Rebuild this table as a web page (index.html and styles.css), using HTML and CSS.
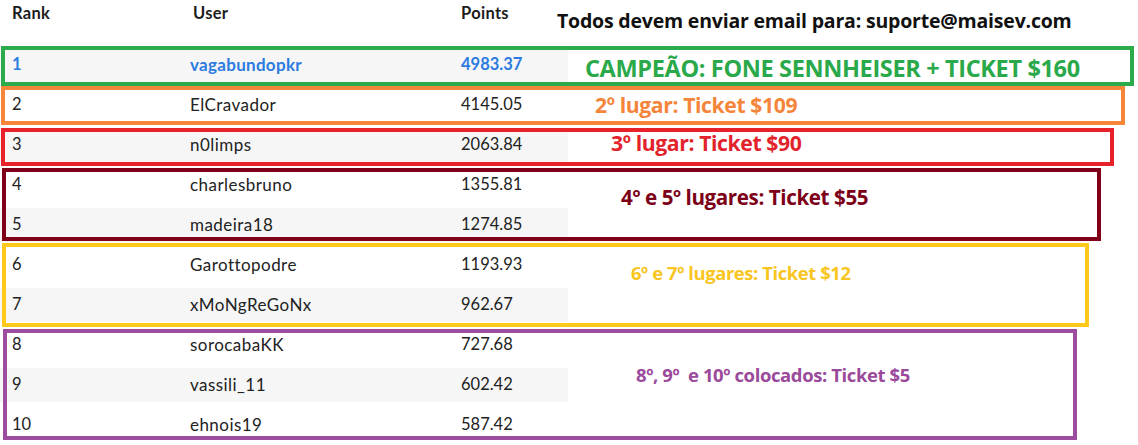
FILE: index.html
```html
<!DOCTYPE html>
<html lang="pt">
<head>
<meta charset="utf-8">
<title>Ranking</title>
<link rel="stylesheet" href="styles.css">
</head>
<body>
<div class="board">
  <div class="head">
    <div class="hcell">Rank</div>
    <div class="hcell user">User</div>
    <div class="hcell">Points</div>
    <div class="notice">Todos devem enviar email para: suporte@maisev.com</div>
  </div>
  <div class="rows">
    <div class="row odd top"><span>1</span><span class="name">vagabundopkr</span><span>4983.37</span></div>
    <div class="row"><span>2</span><span class="name">ElCravador</span><span>4145.05</span></div>
    <div class="row odd"><span>3</span><span class="name">n0limps</span><span>2063.84</span></div>
    <div class="row"><span>4</span><span class="name">charlesbruno</span><span>1355.81</span></div>
    <div class="row odd"><span>5</span><span class="name">madeira18</span><span>1274.85</span></div>
    <div class="row"><span>6</span><span class="name">Garottopodre</span><span>1193.93</span></div>
    <div class="row odd"><span>7</span><span class="name">xMoNgReGoNx</span><span>962.67</span></div>
    <div class="row"><span>8</span><span class="name">sorocabaKK</span><span>727.68</span></div>
    <div class="row odd"><span>9</span><span class="name">vassili_11</span><span>602.42</span></div>
    <div class="row"><span>10</span><span class="name">ehnois19</span><span>587.42</span></div>
  </div>

  <div class="mark m-green"><span class="label">CAMPEÃO: FONE SENNHEISER + TICKET $160</span></div>
  <div class="mark m-orange"><span class="label">2º lugar: Ticket $109</span></div>
  <div class="mark m-red"><span class="label">3º lugar: Ticket $90</span></div>
  <div class="mark m-wine"><span class="label">4º e 5º lugares: Ticket $55</span></div>
  <div class="mark m-yellow"><span class="label">6º e 7º lugares: Ticket $12</span></div>
  <div class="mark m-purple"><span class="label">8º, 9º&nbsp; e 10º colocados: Ticket $5</span></div>
</div>
</body>
</html>
```

FILE: styles.css
```css
html, body {
  margin: 0;
  padding: 0;
  background: #ffffff;
}

body {
  width: 1138px;
  height: 445px;
  overflow: hidden;
  font-family: Lato, "Open Sans", sans-serif;
  color: #222222;
}

.board {
  position: relative;
  width: 1138px;
  height: 445px;
}

.head {
  display: grid;
  grid-template-columns: 181px 268px 96px auto;
  height: 48px;
  padding-left: 12px;
  box-sizing: border-box;
}

.hcell {
  font-weight: 700;
  font-size: 16.5px;
  line-height: 16px;
  padding-top: 5px;
  color: #1c1c1c;
  letter-spacing: 0.3px;
}

.notice {
  font-family: "Open Sans", sans-serif;
  font-weight: 700;
  font-size: 19.5px;
  line-height: 22px;
  padding-top: 10px;
  color: #111111;
  white-space: nowrap;
  letter-spacing: -0.2px;
}

.rows {
  display: flex;
  flex-direction: column;
  gap: 6px;
  width: 568px;
}

.row {
  display: grid;
  grid-template-columns: 178px 271px auto;
  align-items: center;
  height: 34px;
  box-sizing: border-box;
  padding: 0 0 2px 12px;
  font-size: 16.5px;
  color: #222222;
}

.row .name {
  font-size: 17px;
  letter-spacing: 0.45px;
}

.row.odd {
  background: #f6f6f6;
}

.row.top {
  color: #2c7be0;
  font-weight: 700;
}

.row.top .name {
  letter-spacing: 0.3px;
}

.mark {
  position: absolute;
  box-sizing: border-box;
  border: 4px solid;
  display: flex;
  align-items: flex-start;
  font-family: "Open Sans", sans-serif;
  font-weight: 700;
  white-space: nowrap;
}

.label {
  display: block;
  letter-spacing: -0.4px;
}

.m-green {
  left: 1px; top: 46px; width: 1133px; height: 40px;
  border-color: #2bab4c;
  color: #2aa94a;
  font-size: 23.5px;
  padding: 3px 0 0 580px;
}
.m-green .label { line-height: 30px; letter-spacing: -0.35px; }

.m-orange {
  left: 1px; top: 86px; width: 1124px; height: 39px;
  border-color: #f6873a;
  color: #f5853b;
  font-size: 21.2px;
  padding: 1px 0 0 590px;
}
.m-orange .label { line-height: 28px; }

.m-red {
  left: 1px; top: 128px; width: 1113px; height: 38px;
  border-color: #e8222b;
  color: #e2232b;
  font-size: 21.2px;
  padding: 0 0 0 606px;
}
.m-red .label { line-height: 22px; }

.m-wine {
  left: 2px; top: 168px; width: 1099px; height: 73px;
  border-color: #7f0018;
  color: #7c0017;
  font-size: 20.6px;
  padding: 12px 0 0 615px;
}
.m-wine .label { line-height: 26px; }

.m-yellow {
  left: 2px; top: 243px; width: 1087px; height: 84px;
  border-color: #ffc91c;
  color: #f9c520;
  font-size: 18.4px;
  padding: 14px 0 0 625px;
}
.m-yellow .label { line-height: 24px; }

.m-purple {
  left: 3px; top: 329px; width: 1074px; height: 111px;
  border-color: #9e4c9e;
  color: #9b4a9b;
  font-size: 18.5px;
  padding: 30px 0 0 629px;
}
.m-purple .label { line-height: 24px; }
```
